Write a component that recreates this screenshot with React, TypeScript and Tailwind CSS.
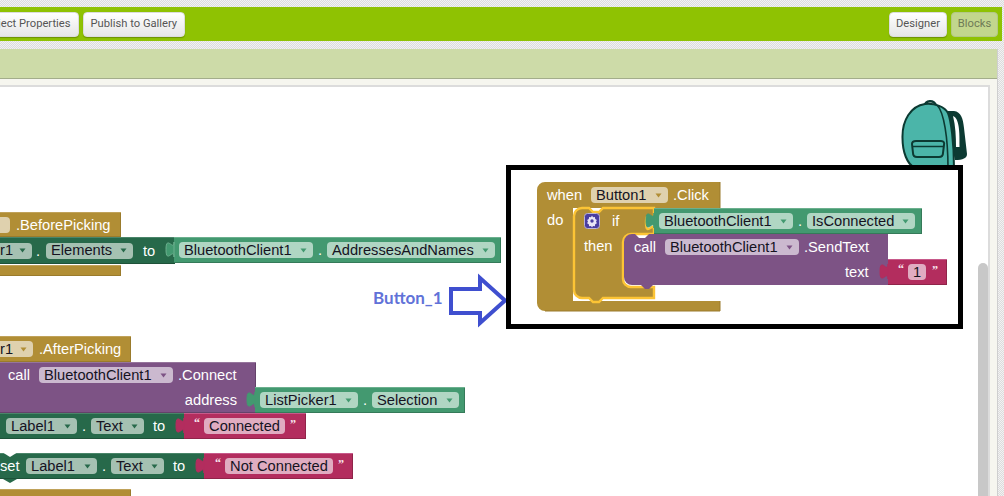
import React from "react";

const sans = "font-['Liberation_Sans',Arial,sans-serif]";
const dither =
  "bg-[repeating-conic-gradient(#dcdcdc_0_25%,#f2f2f2_0_50%)] bg-[length:2px_2px]";

function HeaderButton({ children, className = "" }: { children: React.ReactNode; className?: string }) {
  return (
    <button
      className={
        "h-[25px] shrink-0 rounded-[4px] border border-[#dcdcdc] bg-gradient-to-b from-white to-[#e6e6e6] px-[7px] font-['Roboto',sans-serif] text-[11.2px] text-[#555] shadow-[0_1px_1px_rgba(0,0,0,0.25)] " +
        className
      }
    >
      {children}
    </button>
  );
}

function Pill({ w, text, tri, bg }: { w: string; text: string; tri: string; bg: string }) {
  return (
    <span className={`flex h-[16px] shrink-0 items-center justify-between rounded-[4px] pl-[5px] pr-[6px] text-[#15131f] ${w} ${bg}`}>
      <span className="whitespace-nowrap leading-none">{text}</span>
      <svg width="7" height="5" viewBox="0 0 7 5">
        <path d="M0.5 0.5H6.5L3.5 4.5Z" fill={tri} />
      </svg>
    </span>
  );
}

function Tab({ fill, edge }: { fill: string; edge?: string }) {
  return (
    <svg width="10" height="17" viewBox="0 0 10 17" className="absolute left-[-8px] top-[5px]" overflow="visible">
      <path d="M8 0c0 10 -8 -8 -8 7.5s8 -2.5 8 7.5Z" fill={fill} stroke={edge ?? fill} strokeWidth="1" />
    </svg>
  );
}

const greenPill = "bg-[#b0d6c3]";
const darkPill = "bg-[#a5c1b2]";
const purplePill = "bg-[#cbb9cf]";
const goldPill = "bg-[#dfd1ae]";
const greenBevel = "bg-[#439970] shadow-[inset_0_1px_0_#6cb08e,inset_-1px_-1px_0_#357a59]";
const darkBevel = "bg-[#27694a] shadow-[inset_0_1px_0_#4a8569,inset_0_-1px_0_#1e5239]";
const pinkBevel = "bg-[#b32d5e] shadow-[inset_0_1px_0_#c7598a,inset_-1px_-1px_0_#8f2449]";
const goldBevel = "bg-[#b18e35] shadow-[inset_0_1px_0_#c0a25a,inset_-1px_-1px_0_#9a7b2c]";
const purpleBevel = "bg-[#7d5385] shadow-[inset_0_1px_0_#96759c,inset_-1px_-1px_0_#64426a]";

function Quote({ c }: { c: string }) {
  return <span className="inline-block w-[6px] -translate-y-[3px] font-['Liberation_Serif',serif] text-[12px] font-bold leading-none text-[#f8e6ee]">{c}</span>;
}

function Backpack() {
  return (
    <svg width="70" height="70" viewBox="0 0 70 70" className="absolute left-[899px] top-[98px]">
      <path d="M44 13L55 13C62 14 64 20 65 30L68 56C68 60 64 62 56 62Z" fill="#0c3a32" />
      <path d="M54 18C59 20 61 28 60.5 49L57 49C57 38 56.5 28 54 18Z" fill="#ffffff" />
      <path d="M26 8C25 2.5 36 1 37 8" fill="none" stroke="#0c3a32" strokeWidth="2.6" />
      <path d="M3.5 40C3 22 12 8 26 6C36 5 46 9 49 15C52 22 55 45 55 70L16 70C8 66 3.5 54 3.5 40Z" fill="#4bb5a9" stroke="#0c3a32" strokeWidth="2" />
      <path d="M38 7C45 14 49 40 49 70" fill="none" stroke="#0c3a32" strokeWidth="1.6" />
      <path d="M13 46C13 44 15 43 17 43L42 43C45 43 45.5 45 45 47L44 55C44 58 42 59 40 59L18 59C15 59 14 57 14 55Z" fill="#4bb5a9" stroke="#0c3a32" strokeWidth="2" />
      <path d="M13.5 48.5H45" stroke="#0c3a32" strokeWidth="1.5" />
    </svg>
  );
}

function MainEvent() {
  const t = `absolute ${sans} text-[14.67px] leading-[16px]`;
  return (
    <div className="absolute left-[537px] top-[182px] h-[130px] w-[411px] text-white">
      <svg width="411" height="130" viewBox="0 0 411 130" className="absolute left-0 top-0">
        <path d="M0 8A8 8 0 0 1 8 0H183V26H36V119H183V129H8A8 8 0 0 1 0 121Z" fill="#b18e35" />
        <path d="M183 0V26M183 119V129H8" fill="none" stroke="#9a7b2c" strokeWidth="1" />
        <path d="M44 118H60" stroke="#ffffff" strokeWidth="2" />
        <path
          d="M37 34A8 8 0 0 1 45 26H52L56 30H62L66 26H117V33c0 10 -8 -8 -8 7.5s8 -2.5 8 7.5V52H94A8 8 0 0 0 86 60V97A8 8 0 0 0 94 105H117V116H66L62 120H56L52 116H45A8 8 0 0 1 37 108Z"
          fill="#b18e35"
          stroke="#fcc435"
          strokeWidth="2.4"
        />
        <path d="M87 60A8 8 0 0 1 95 52H98L102 56H108L112 52H351V103H116L112 107H108L104 103H95A8 8 0 0 1 87 95Z" fill="#7d5385" />
        <rect x="47.5" y="31.5" width="15" height="15" rx="3" fill="#4a3da0" stroke="#b9b2d8" strokeWidth="1" />
        <g fill="#e9e5f5">
          <path d="M55 33.6l1 1.7 1.9-.3.3 1.9 1.7 1-.9 1.7.9 1.7-1.7 1-.3 1.9-1.9-.3-1 1.5-1-1.5-1.9.3-.3-1.9-1.7-1 .9-1.7-.9-1.7 1.7-1 .3-1.9 1.9.3zM55 37.3a1.7 1.7 0 1 0 0 3.4a1.7 1.7 0 1 0 0-3.4z" fillRule="evenodd" />
        </g>
      </svg>
      <div className={`absolute left-[10px] top-[5px] flex h-[16px] items-center ${sans} text-[14.67px]`}>
        <span className="w-[44px]">when</span>
        <Pill w="w-[77px]" text="Button1" tri="#b18e35" bg={goldPill} />
        <span className="ml-[5px]">.Click</span>
      </div>
      <span className={`${t} left-[10px] top-[30px]`}>do</span>
      <span className={`${t} left-[75px] top-[31px]`}>if</span>
      <span className={`${t} left-[47px] top-[56px]`}>then</span>
      <div className={`absolute left-[97px] top-[57px] flex h-[16px] items-center ${sans} text-[14.67px]`}>
        <span className="w-[31px]">call</span>
        <Pill w="w-[134px]" text="BluetoothClient1" tri="#7d5385" bg={purplePill} />
        <span className="ml-[5px]">.SendText</span>
      </div>
      <span className={`${t} left-[308px] top-[82px]`}>text</span>
    </div>
  );
}

function Workspace() {
  const font = `${sans} text-[14.67px] text-white`;
  return (
    <div className="relative min-h-0 flex-1 overflow-hidden bg-white">
      <div className="absolute -top-[87px] left-0 h-[496px] w-[1004px]">
        <div className={`absolute left-0 top-[212px] flex h-[25px] w-[121px] items-center ${goldBevel} ${font}`}>
          <span className="h-[16px] w-[10px] rounded-r-[4px] bg-[#dfd1ae]" />
          <span className="ml-[6px]">.BeforePicking</span>
        </div>
        <div className={`absolute left-0 top-[237px] flex h-[27px] w-[175px] items-center ${darkBevel} ${font}`}>
          <span className="flex h-[16px] w-[32px] items-center justify-between rounded-r-[4px] bg-[#a5c1b2] pr-[6px] text-[#15131f]">
            <span className="leading-none">r1</span>
            <svg width="7" height="5" viewBox="0 0 7 5"><path d="M0.5 0.5H6.5L3.5 4.5Z" fill="#27694a" /></svg>
          </span>
          <span className="ml-[4px] w-[10px]">.</span>
          <Pill w="w-[87px]" text="Elements" tri="#27694a" bg={darkPill} />
          <span className="ml-[10px]">to</span>
        </div>
        <div className={`absolute left-[174px] top-[237px] flex h-[26px] w-[327px] items-center pl-[5px] ${greenBevel} ${font}`}>
          <Tab fill="#439970" edge="#6cb08e" />
          <Pill w="w-[134px]" text="BluetoothClient1" tri="#439970" bg={greenPill} />
          <span className="w-[14px] pl-[5px]">.</span>
          <Pill w="w-[168px]" text="AddressesAndNames" tri="#439970" bg={greenPill} />
        </div>
        <div className={`absolute left-0 top-[265px] h-[11px] w-[121px] ${goldBevel}`} />

        <span className="absolute left-[373px] top-[288px] font-['Lato',sans-serif] text-[17px] font-bold leading-[20px] text-[#6172d8]">Button_1</span>
        <svg width="66" height="58" viewBox="0 0 66 58" className="absolute left-[448px] top-[272px]">
          <path d="M3 17H32V6L57 28.5L32 51V41H3Z" fill="#ffffff" stroke="#3f4fcf" strokeWidth="4" />
        </svg>

        <Backpack />

        <MainEvent />

        <div className={`absolute left-[654px] top-[208px] flex h-[26px] w-[268px] items-center pl-[5px] ${greenBevel} ${font}`}>
          <Tab fill="#439970" />
          <Pill w="w-[134px]" text="BluetoothClient1" tri="#439970" bg={greenPill} />
          <span className="w-[14px] pl-[5px]">.</span>
          <Pill w="w-[108px]" text="IsConnected" tri="#439970" bg={greenPill} />
        </div>
        <div className={`absolute left-[888px] top-[259px] flex h-[26px] w-[59px] items-center pl-[10px] ${pinkBevel} ${font}`}>
          <Tab fill="#b32d5e" />
          <Quote c="“" />
          <span className="ml-[4px] flex h-[16px] w-[18px] items-center justify-center rounded-[4px] bg-[#e0acc1] text-[#15131f]">1</span>
          <span className="ml-[6px]"><Quote c="”" /></span>
        </div>

        <div className="absolute left-[506px] top-[165px] h-[164px] w-[457px] border-[5px] border-black" />

        <div className={`absolute left-0 top-[336px] flex h-[26px] w-[131px] items-center ${goldBevel} ${font}`}>
          <span className="flex h-[16px] w-[33px] items-center justify-between rounded-r-[4px] bg-[#dfd1ae] pr-[6px] text-[#15131f]">
            <span className="leading-none">r1</span>
            <svg width="7" height="5" viewBox="0 0 7 5"><path d="M0.5 0.5H6.5L3.5 4.5Z" fill="#b18e35" /></svg>
          </span>
          <span className="ml-[6px]">.AfterPicking</span>
        </div>
        <div className={`absolute left-0 top-[362px] h-[51px] w-[256px] ${purpleBevel} ${font}`}>
          <div className="flex h-[26px] items-center pl-[8px]">
            <span className="w-[31px]">call</span>
            <Pill w="w-[134px]" text="BluetoothClient1" tri="#7d5385" bg={purplePill} />
            <span className="ml-[5px]">.Connect</span>
          </div>
          <div className="flex h-[24px] items-center justify-end pr-[19px]">address</div>
        </div>
        <div className={`absolute left-[255px] top-[387px] flex h-[26px] w-[210px] items-center pl-[5px] ${greenBevel} ${font}`}>
          <Tab fill="#439970" />
          <Pill w="w-[98px]" text="ListPicker1" tri="#439970" bg={greenPill} />
          <span className="w-[14px] pl-[5px]">.</span>
          <Pill w="w-[87px]" text="Selection" tri="#439970" bg={greenPill} />
        </div>
        <div className={`absolute left-0 top-[413px] flex h-[26px] w-[185px] items-center pl-[6px] ${darkBevel} ${font}`}>
          <Pill w="w-[71px]" text="Label1" tri="#27694a" bg={darkPill} />
          <span className="w-[14px] pl-[5px]">.</span>
          <Pill w="w-[53px]" text="Text" tri="#27694a" bg={darkPill} />
          <span className="ml-[9px]">to</span>
        </div>
        <div className={`absolute left-[184px] top-[413px] flex h-[26px] w-[122px] items-center pl-[10px] ${pinkBevel} ${font}`}>
          <Tab fill="#b32d5e" />
          <Quote c="“" />
          <span className="ml-[4px] flex h-[16px] w-[81px] items-center justify-center rounded-[4px] bg-[#e0acc1] text-[#15131f]">Connected</span>
          <span className="ml-[5px]"><Quote c="”" /></span>
        </div>

        <div className={`absolute left-0 top-[453px] flex h-[26px] w-[205px] items-center ${darkBevel} ${font}`}>
          <span className="w-[26px] pr-[9px] text-right leading-none">set</span>
          <Pill w="w-[71px]" text="Label1" tri="#27694a" bg={darkPill} />
          <span className="w-[14px] pl-[5px]">.</span>
          <Pill w="w-[53px]" text="Text" tri="#27694a" bg={darkPill} />
          <span className="ml-[9px]">to</span>
          <svg width="22" height="32" viewBox="0 0 22 32" className="absolute left-0 top-0" overflow="visible">
            <path d="M2 -1L10 4L18 -1Z" fill="#ffffff" />
            <path d="M3 26L10 30L17 26Z" fill="#27694a" />
          </svg>
        </div>
        <div className={`absolute left-[204px] top-[453px] flex h-[26px] w-[149px] items-center pl-[11px] ${pinkBevel} ${font}`}>
          <Tab fill="#b32d5e" />
          <Quote c="“" />
          <span className="ml-[4px] flex h-[16px] w-[108px] items-center justify-center rounded-[4px] bg-[#e0acc1] text-[#15131f]">Not Connected</span>
          <span className="ml-[5px]"><Quote c="”" /></span>
        </div>
        <div className={`absolute left-0 top-[489px] h-[10px] w-[131px] ${goldBevel}`} />
      </div>
      <div className="absolute left-[978px] top-[176px] h-[240px] w-[10px] rounded-t-[5px] bg-[#c8c8c8]" />
    </div>
  );
}

export default function App() {
  return (
    <div className={`flex h-[496px] w-[1004px] flex-col overflow-hidden ${dither}`}>
      <div className="mt-[7px] flex h-[34px] w-[1002px] shrink-0 items-center justify-between bg-[#8fc202] pr-[4px]">
        <div className="flex items-center gap-[4px]">
          <HeaderButton className="-ml-[27px]">Project Properties</HeaderButton>
          <HeaderButton>Publish to Gallery</HeaderButton>
        </div>
        <div className="flex items-center gap-[4px]">
          <HeaderButton className="w-[58px] !px-0">Designer</HeaderButton>
          <button className="h-[25px] w-[47px] rounded-[4px] border border-[#b3c886] bg-[#c2d68d] font-['Roboto',sans-serif] text-[11.2px] text-[#6e7a56]">Blocks</button>
        </div>
      </div>
      <div className="mt-[8px] flex min-h-0 w-[998px] flex-1 flex-col border-r border-[#cfcfcf]">
        <div className="h-[30px] shrink-0 border-b border-[#a3ad8b] bg-[#cddba8]" />
        <div className="flex min-h-0 flex-1 flex-col bg-[#f6f6ef] pr-[7px] pt-[6px]">
          <div className="flex min-h-0 flex-1 flex-col border-r-2 border-t-2 border-[#dcdcdc]">
            <Workspace />
          </div>
        </div>
      </div>
    </div>
  );
}
